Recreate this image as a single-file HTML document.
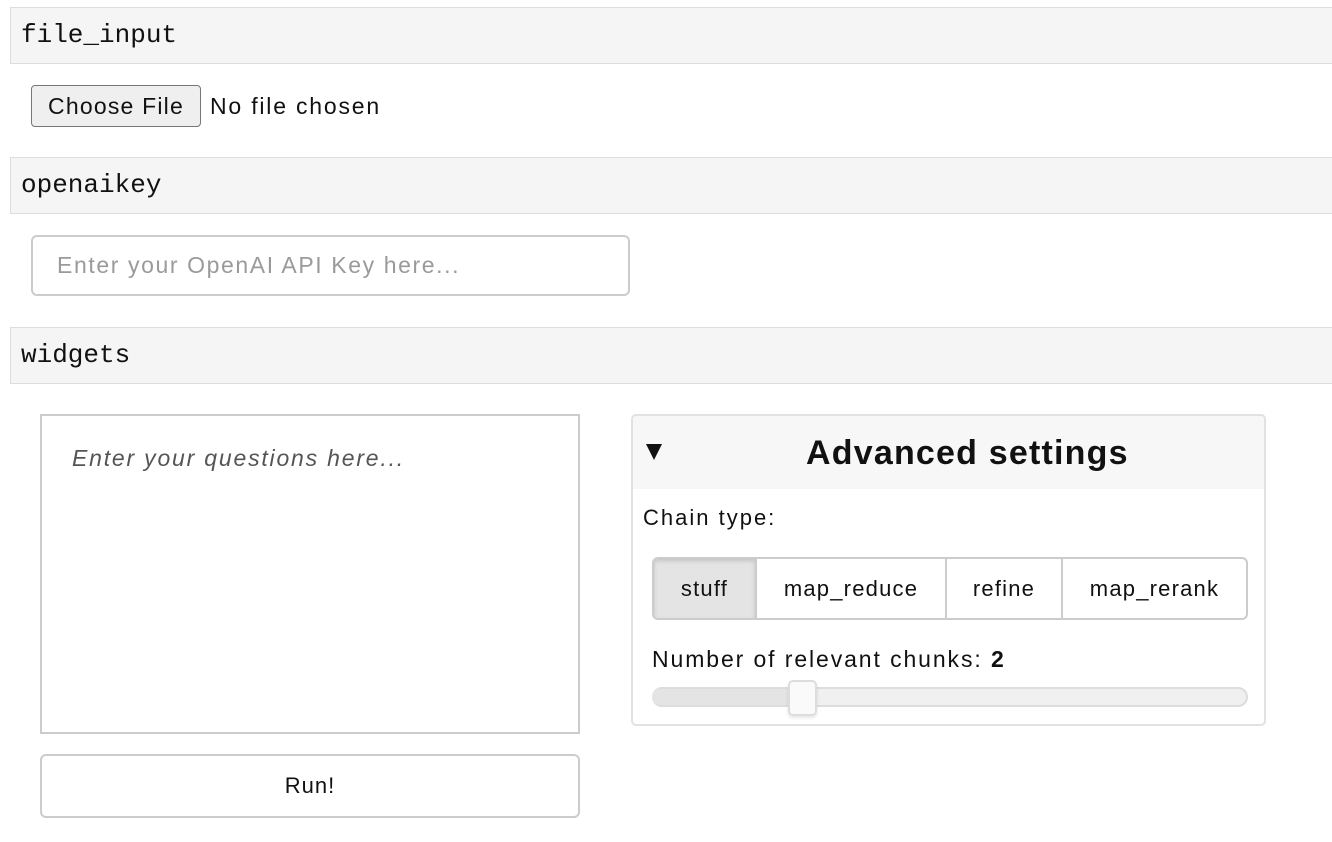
<!DOCTYPE html>
<html><head><meta charset="utf-8"><style>
*{box-sizing:border-box;margin:0;padding:0}
body{width:1332px;height:842px;background:#fff;position:relative;overflow:hidden;font-family:"Liberation Sans",sans-serif;color:#111}
.a{position:absolute}
.hdr{left:10px;width:1330px;height:57px;background:#f5f5f5;border:1px solid #ddd;font-family:"Liberation Mono","DejaVu Sans Mono",monospace;font-size:26px;padding-left:10px;line-height:55px;color:#111}
.t{white-space:nowrap}
</style></head><body>
<div class="a hdr" style="top:7px">file_input</div>
<div class="a" style="left:31px;top:85px;width:170px;height:42px;background:#efefef;border:1px solid #767676;border-radius:4px;font-size:23px;line-height:40px;text-align:center;letter-spacing:1.2px">Choose File</div>
<div class="a t" style="left:210px;top:85px;font-size:23px;line-height:42px;letter-spacing:1.8px">No file chosen</div>

<div class="a hdr" style="top:157px">openaikey</div>
<div class="a" style="left:31px;top:235px;width:599px;height:61px;border:2px solid #ccc;border-radius:6px;font-size:23px;line-height:57px;padding-left:24px;color:#9a9a9a;letter-spacing:1.6px;white-space:nowrap">Enter your OpenAI API Key here...</div>

<div class="a hdr" style="top:327px">widgets</div>
<div class="a" style="left:40px;top:414px;width:540px;height:320px;border:2px solid #ccc"></div>
<div class="a t" style="left:72px;top:445px;font-size:23px;font-style:italic;color:#555;letter-spacing:1.8px">Enter your questions here...</div>
<div class="a" style="left:40px;top:754px;width:540px;height:64px;border:2px solid #ccc;border-radius:6px;font-size:22px;line-height:60px;text-align:center;letter-spacing:1px">Run!</div>

<div class="a" style="left:631px;top:414px;width:635px;height:312px;border:2px solid #e2e2e2;border-radius:5px;overflow:hidden">
  <div style="height:73px;background:#f7f7f7"></div>
</div>
<div class="a" style="left:646px;top:444px;width:0;height:0;border-left:8px solid transparent;border-right:8px solid transparent;border-top:16px solid #111"></div>
<div class="a t" style="left:806px;top:431px;font-size:34px;font-weight:bold;line-height:44px;letter-spacing:1.2px">Advanced settings</div>
<div class="a t" style="left:643px;top:505px;font-size:22px;letter-spacing:2px">Chain type:</div>
<div class="a" style="left:652px;top:557px;width:596px;height:63px;border:2px solid #ccc;border-radius:6px;display:flex;font-size:22px;line-height:59px;overflow:hidden;letter-spacing:1.2px">
  <div style="width:103px;text-align:center;background:#e4e4e4;border-right:2px solid #ccc;box-shadow:inset 0 2px 4px rgba(0,0,0,.15)">stuff</div>
  <div style="width:190px;text-align:center;border-right:2px solid #ccc">map_reduce</div>
  <div style="width:116px;text-align:center;border-right:2px solid #ccc">refine</div>
  <div style="flex:1;text-align:center">map_rerank</div>
</div>
<div class="a t" style="left:652px;top:646px;font-size:23px;letter-spacing:1.9px">Number of relevant chunks: <b>2</b></div>
<div class="a" style="left:652px;top:687px;width:596px;height:20px;background:#f0f0f0;border:2px solid #ddd;border-radius:10px"></div>
<div class="a" style="left:652px;top:689px;width:146px;height:16px;background:#e4e4e4;border-radius:8px 0 0 8px"></div>
<div class="a" style="left:788px;top:680px;width:29px;height:36px;background:#fafafa;border:2px solid #ddd;border-radius:5px;box-shadow:0 2px 3px rgba(0,0,0,.1)"></div>
</body></html>
